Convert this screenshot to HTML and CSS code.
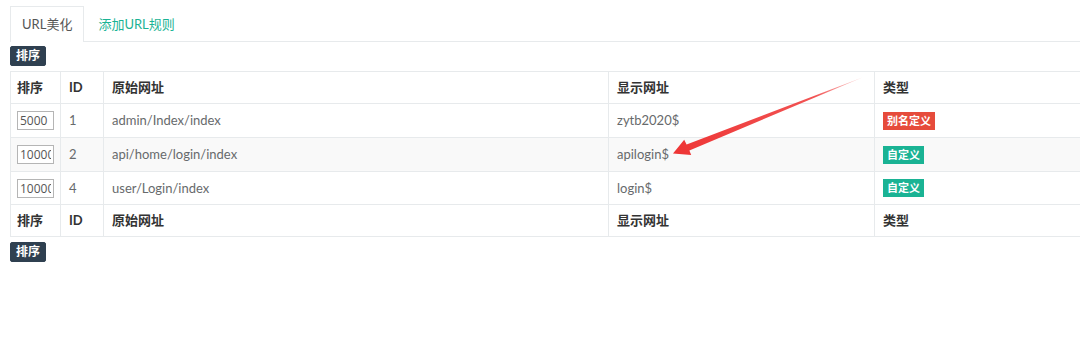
FILE: index.html
```html
<!doctype html>
<html lang="zh-CN">
  <head>
    <meta charset="UTF-8" />
    <title>URL美化</title>
    <link rel="stylesheet" href="styles.css">
  </head>
  <body>
    <ul class="tabs">
      <li class="tab active">URL美化</li>
      <li class="tab">添加URL规则</li>
    </ul>

    <button class="btn-sort">排序</button>

    <table class="rules">
      <thead>
        <tr>
          <th class="col-sort">排序</th>
          <th class="col-id">ID</th>
          <th class="col-src">原始网址</th>
          <th class="col-show">显示网址</th>
          <th>类型</th>
        </tr>
      </thead>
      <tbody>
        <tr>
          <td class="col-sort"><input class="order" type="text" value="5000"></td>
          <td>1</td>
          <td>admin/Index/index</td>
          <td>zytb2020$</td>
          <td><span class="label label-danger">别名定义</span></td>
        </tr>
        <tr class="odd">
          <td class="col-sort"><input class="order" type="text" value="10000"></td>
          <td>2</td>
          <td>api/home/login/index</td>
          <td>apilogin$</td>
          <td><span class="label label-primary">自定义</span></td>
        </tr>
        <tr>
          <td class="col-sort"><input class="order" type="text" value="10000"></td>
          <td>4</td>
          <td>user/Login/index</td>
          <td>login$</td>
          <td><span class="label label-primary">自定义</span></td>
        </tr>
      </tbody>
      <tfoot>
        <tr>
          <th class="col-sort">排序</th>
          <th>ID</th>
          <th>原始网址</th>
          <th>显示网址</th>
          <th>类型</th>
        </tr>
      </tfoot>
    </table>

    <button class="btn-sort">排序</button>

    <!-- annotation arrow drawn over the table -->
    <svg class="arrow" width="1080" height="360" viewBox="0 0 1080 360">
      <defs>
        <linearGradient id="fade" x1="863" y1="78" x2="673" y2="153" gradientUnits="userSpaceOnUse">
          <stop offset="0" stop-color="#f25050" stop-opacity="0.25" />
          <stop offset="0.25" stop-color="#f04040" stop-opacity="0.9" />
          <stop offset="1" stop-color="#ee3535" />
        </linearGradient>
      </defs>
      <polygon fill="url(#fade)"
        points="863,77.2 689.4,150.4 691.2,155 673,153.5 684.2,139.8 686.6,144.4" />
    </svg>
  </body>
</html>
```

FILE: styles.css
```css
html {
  overflow: hidden;
}
body {
  margin: 0;
  padding: 6px 0 0 10px;
  font-family: Lato, 'Noto Sans CJK SC', sans-serif;
  font-size: 13px;
  color: #676a6c;
  background: #ffffff;
  position: relative;
  height: 354px;
}
.tabs {
  list-style: none;
  margin: 0;
  padding: 0;
  display: flex;
  border-bottom: 1px solid #e7eaec;
  margin-right: -10px;
}
.tab {
  padding: 0 11px;
  height: 34px;
  line-height: 34px;
  color: #1ab394;
  border: 1px solid transparent;
  border-bottom: none;
  margin-bottom: -1px;
  margin-right: 2px;
}
.tab.active {
  color: #555;
  background: #fff;
  border-color: #e7eaec;
  height: 35px;
  padding: 0 11px;
}
.btn-sort {
  display: block;
  margin: 4px 0 0;
  height: 20px;
  padding: 0 5px;
  border: 1px solid #2f4050;
  border-radius: 2px;
  background: #2f4050;
  color: #fff;
  font-family: Lato, 'Noto Sans CJK SC', sans-serif;
  font-size: 12px;
  font-weight: bold;
  line-height: 18px;
}
.rules {
  border-collapse: collapse;
  width: 1090px;
  margin: 5px 0 5px;
  table-layout: fixed;
}
.rules th,
.rules td {
  border: 1px solid #e7eaec;
  text-align: left;
  padding: 0 8px;
  line-height: 17px;
}
.rules th {
  height: 31px;
  color: #333;
  font-weight: bold;
}
.rules td {
  height: 33px;
}
.rules tbody tr:last-child td {
  height: 32px;
}
.rules .col-sort {
  width: 50px;
  padding-left: 6px;
  padding-right: 6px;
  box-sizing: border-box;
}
.rules .col-id {
  width: 43px;
  box-sizing: border-box;
}
.rules .col-src {
  width: 505px;
  box-sizing: border-box;
}
.rules .col-show {
  width: 266px;
  box-sizing: border-box;
}
.rules tr.odd td {
  background: #f9f9f9;
}
.order {
  display: block;
  width: 37px;
  height: 19px;
  box-sizing: border-box;
  padding: 0 2px;
  border: 1px solid #b5b5b5;
  font-family: 'Open Sans', sans-serif;
  font-size: 12px;
  color: #555;
  background: #fff;
}
.label {
  display: inline-block;
  padding: 0 4px;
  height: 18px;
  line-height: 18px;
  font-size: 11px;
  font-weight: bold;
  color: #fff;
  vertical-align: middle;
}
.label-danger {
  background: #e64b3b;
}
.label-primary {
  background: #1ab394;
}
.arrow {
  position: absolute;
  top: 0;
  left: 0;
  pointer-events: none;
}
```
